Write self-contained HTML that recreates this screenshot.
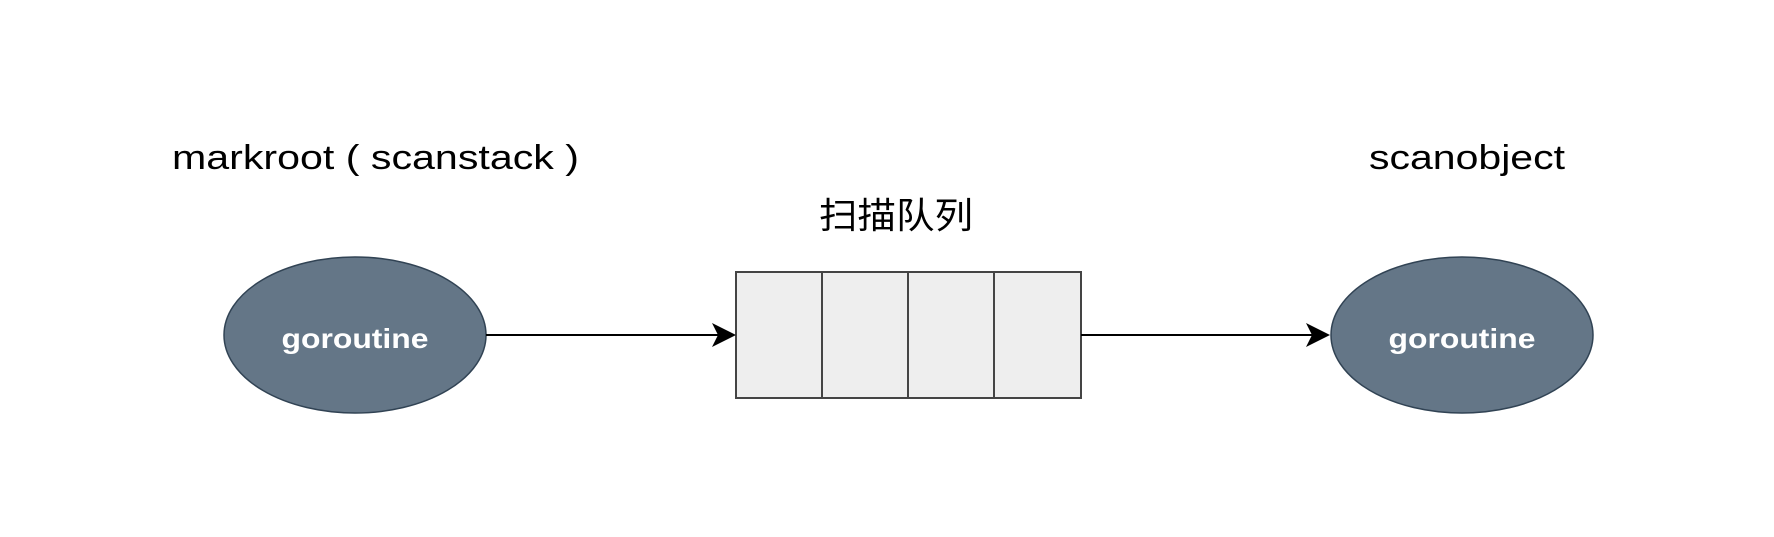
<!DOCTYPE html>
<html><head><meta charset="utf-8"><style>
html,body{margin:0;padding:0;background:#fff;}
body{width:1774px;height:532px;position:relative;overflow:hidden;}
</style></head><body>
<svg width="1774" height="532" viewBox="0 0 1774 532" xmlns="http://www.w3.org/2000/svg">
<text x="172" y="169" font-family="Liberation Sans, sans-serif" font-size="34" fill="#000" textLength="407" lengthAdjust="spacingAndGlyphs">markroot ( scanstack )</text>
<text x="1369" y="169" font-family="Liberation Sans, sans-serif" font-size="34" fill="#000" textLength="196" lengthAdjust="spacingAndGlyphs">scanobject</text>
<text x="819" y="228" font-family="Liberation Sans, 'Noto Sans CJK SC', sans-serif" font-size="36" fill="#000" textLength="154" lengthAdjust="spacingAndGlyphs">扫描队列</text>
<ellipse cx="355" cy="335" rx="131" ry="78" fill="#647687" stroke="#314354" stroke-width="1.5"/>
<ellipse cx="1462" cy="335" rx="131" ry="78" fill="#647687" stroke="#314354" stroke-width="1.5"/>
<text x="355" y="348" text-anchor="middle" font-family="Liberation Sans, sans-serif" font-weight="bold" font-size="28" fill="#fff" textLength="147" lengthAdjust="spacingAndGlyphs">goroutine</text>
<text x="1462" y="348" text-anchor="middle" font-family="Liberation Sans, sans-serif" font-weight="bold" font-size="28" fill="#fff" textLength="147" lengthAdjust="spacingAndGlyphs">goroutine</text>
<rect x="736" y="272" width="345" height="126" fill="#eeeeee" stroke="#444" stroke-width="2"/>
<line x1="822" y1="272" x2="822" y2="398" stroke="#444" stroke-width="2"/>
<line x1="908" y1="272" x2="908" y2="398" stroke="#444" stroke-width="2"/>
<line x1="994" y1="272" x2="994" y2="398" stroke="#444" stroke-width="2"/>
<line x1="486" y1="335" x2="722" y2="335" stroke="#000" stroke-width="2"/>
<path d="M736 335 L712 323 L718 335 L712 347 Z" fill="#000"/>
<line x1="1081" y1="335" x2="1316" y2="335" stroke="#000" stroke-width="2"/>
<path d="M1330 335 L1306 323 L1312 335 L1306 347 Z" fill="#000"/>
</svg>
</body></html>
